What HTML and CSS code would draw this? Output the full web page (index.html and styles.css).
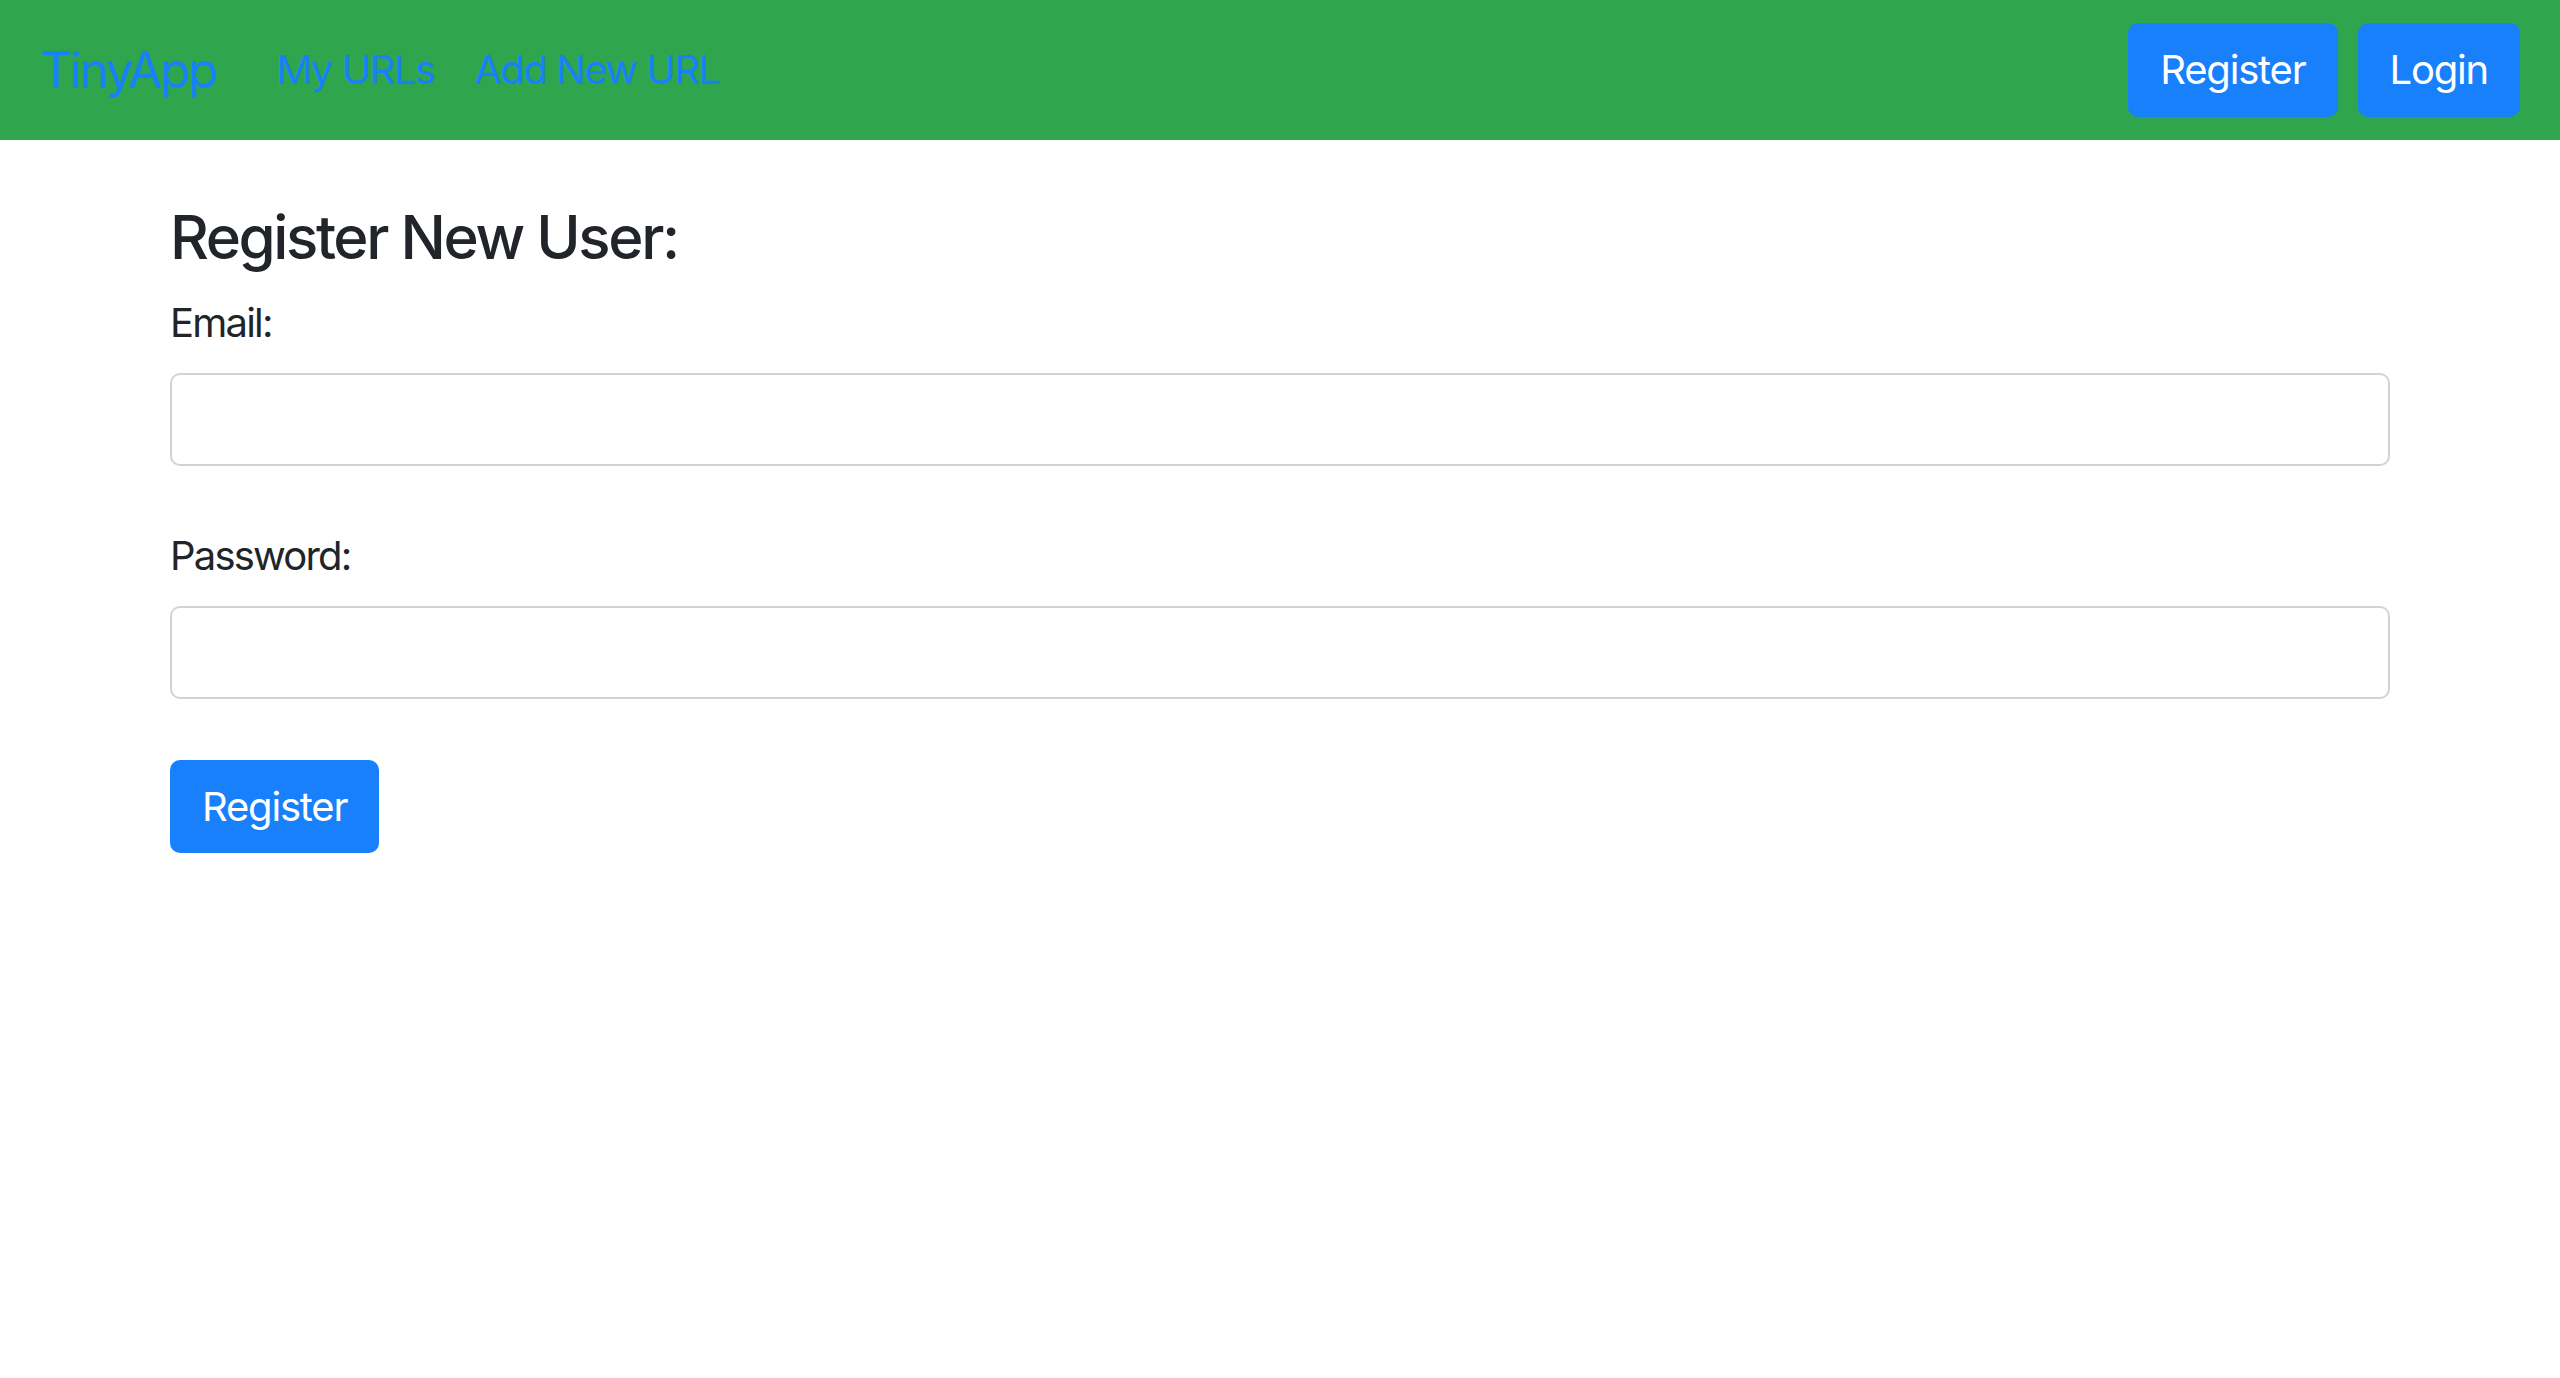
FILE: index.html
```html
<!DOCTYPE html>
<html lang="en">
<head>
<meta charset="utf-8">
<title>TinyApp - Register</title>
<link rel="stylesheet" href="styles.css">
</head>
<body>
  <nav class="navbar">
    <a class="brand" href="#">TinyApp</a>
    <div class="nav-links">
      <a class="nav-link" href="#">My URLs</a>
      <a class="nav-link" href="#">Add New URL</a>
    </div>
    <div class="nav-actions">
      <a class="btn" href="#">Register</a>
      <a class="btn" href="#">Login</a>
    </div>
  </nav>
  <main class="content">
    <h4 class="title">Register New User:</h4>
    <form class="form">
      <div class="form-group">
        <label class="label" for="email">Email:</label>
        <input class="input" id="email" type="email">
      </div>
      <div class="form-group">
        <label class="label" for="password">Password:</label>
        <input class="input" id="password" type="password">
      </div>
      <button class="btn btn-submit" type="submit">Register</button>
    </form>
  </main>
</body>
</html>
```
FILE: styles.css
```css
* { box-sizing: border-box; }
html, body {
  margin: 0;
  padding: 0;
  background: #ffffff;
}
body {
  font-family: Inter, "Noto Sans", "Liberation Sans", sans-serif;
  font-size: 40px;
  line-height: 1.5;
  letter-spacing: -0.045em;
  color: #212529;
}
.navbar {
  display: flex;
  align-items: center;
  height: 140px;
  padding: 0 40px;
  background: #2fa64d;
}
.brand {
  font-size: 50px;
  line-height: 75px;
  padding: 12.5px 0;
  margin-right: 40px;
  letter-spacing: -0.05em;
  color: #1880fa;
  text-decoration: none;
}
.nav-links {
  display: flex;
  flex: 1;
}
.nav-link {
  padding: 20px;
  line-height: 60px;
  letter-spacing: -0.04em;
  color: #1880fa;
  text-decoration: none;
}
.nav-actions {
  display: flex;
  gap: 20px;
}
.btn {
  display: inline-block;
  font-family: inherit;
  font-size: 40px;
  line-height: 60px;
  letter-spacing: -0.03em;
  padding: 15px 30px;
  border: 2.5px solid #1880fa;
  border-radius: 10px;
  background: #1880fa;
  color: #ffffff;
  text-decoration: none;
  cursor: pointer;
}
.content {
  padding: 61px 170px 0;
}
.title {
  margin: 0 0 20px;
  font-size: 60px;
  font-weight: 500;
  line-height: 72px;
  letter-spacing: -0.04em;
}
.form {
  display: flex;
  flex-direction: column;
  align-items: flex-start;
}
.form-group {
  display: flex;
  flex-direction: column;
  width: 100%;
  margin-bottom: 60px;
}
.form-group + .form-group {
  margin-bottom: 61px;
}
.label {
  display: block;
  line-height: 60px;
  margin-bottom: 20px;
}
.input {
  display: block;
  width: 100%;
  height: 93px;
  padding: 15px 30px;
  font-family: inherit;
  font-size: 40px;
  color: #495057;
  background: #ffffff;
  border: 2.5px solid #ced4da;
  border-radius: 10px;
}
.btn-submit {
  height: 93px;
  padding: 0 30px;
}
```
